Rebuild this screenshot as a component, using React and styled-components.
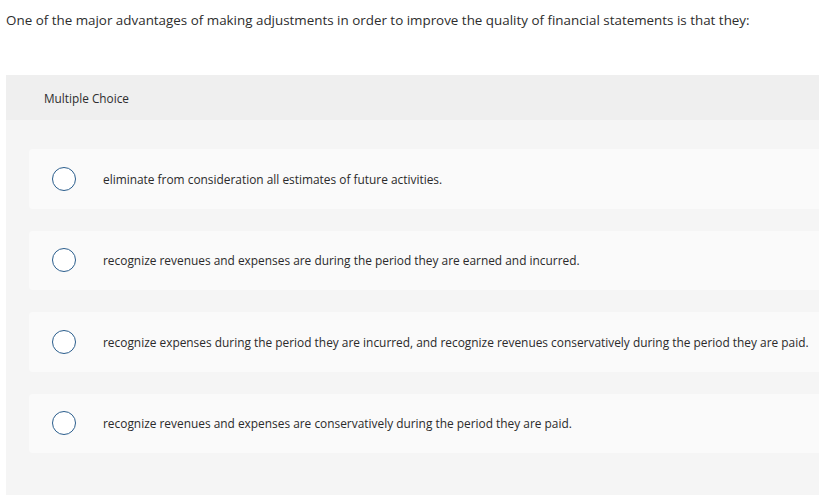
import React from "react";
import styled, { createGlobalStyle } from "styled-components";

const Global = createGlobalStyle`
  html, body { margin: 0; padding: 0; background: #fff; overflow: hidden; }
  body { font-family: "Open Sans", Lato, sans-serif; color: #2b2b2b; }
`;

const Page = styled.div`
  width: 819px;
  height: 495px;
  overflow: hidden;
  padding: 11px 0 0 6px;
  box-sizing: border-box;
`;

const Question = styled.p`
  margin: 0;
  font-size: 13.4px;
  line-height: 19px;
  color: #2d2d2d;
`;

const Panel = styled.div`
  margin-top: 45px;
  width: 900px;
  background: #f5f5f5;
  height: 420px;
`;

const Header = styled.div`
  height: 45px;
  background: #efefef;
  display: flex;
  align-items: center;
  padding-left: 38px;
  font-size: 11.8px;
  color: #2d2d2d;
`;

const Options = styled.div`
  display: flex;
  flex-direction: column;
  gap: 22px;
  padding: 29px 0 0 23px;
`;

const Option = styled.label`
  display: flex;
  align-items: center;
  height: 59.5px;
  background: #fafafa;
  border-radius: 4px;
  padding-left: 23px;
  font-size: 11.9px;
  color: #2b2b2b;
`;

const Radio = styled.span`
  width: 22px;
  height: 22px;
  border: 1.5px solid #2a5d8c;
  border-radius: 50%;
  background: #fff;
  flex: none;
  margin-right: 27px;
`;

const options = [
  "eliminate from consideration all estimates of future activities.",
  "recognize revenues and expenses are during the period they are earned and incurred.",
  "recognize expenses during the period they are incurred, and recognize revenues conservatively during the period they are paid.",
  "recognize revenues and expenses are conservatively during the period they are paid.",
];

export default function App() {
  return (
    <Page>
      <Global />
      <Question>
        One of the major advantages of making adjustments in order to improve the quality of financial statements is that they:
      </Question>
      <Panel>
        <Header>Multiple Choice</Header>
        <Options>
          {options.map((o) => (
            <Option key={o}>
              <Radio />
              {o}
            </Option>
          ))}
        </Options>
      </Panel>
    </Page>
  );
}
